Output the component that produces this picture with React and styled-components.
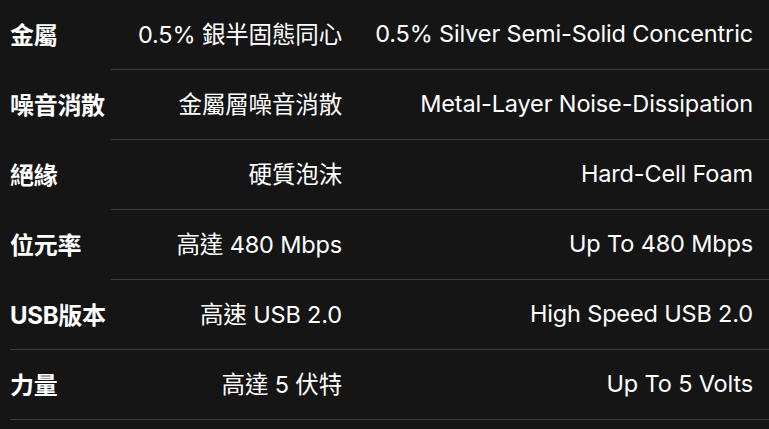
import React from "react";
import styled, { createGlobalStyle } from "styled-components";

const Global = createGlobalStyle`
  html, body { margin: 0; padding: 0; background: #151515; }
  body { font-family: "Inter", "Noto Sans CJK TC", sans-serif; }
`;

const Page = styled.div`
  width: 769px;
  min-height: 429px;
  background: #151515;
  overflow: hidden;
`;

const Row = styled.div`
  display: grid;
  grid-template-columns: 100px 232px 1fr;
  align-items: center;
  height: 66px;
  padding: 0 16px 3px 10px;
  color: #ffffff;
`;

const Label = styled.div`
  font-family: "Inter", "Noto Sans CJK TC", sans-serif;
  font-weight: 700;
  font-size: 24px;
  letter-spacing: -0.3px;
  white-space: nowrap;
`;

const Value = styled.div`
  font-family: "Inter", "Noto Sans CJK TC", sans-serif;
  font-weight: 400;
  font-size: 23.5px;
  letter-spacing: -0.15px;
  text-align: right;
  white-space: nowrap;
`;

const Divider = styled.div`
  height: 1px;
  background: #3d3d3d;
  margin-left: ${(p) => p.$inset}px;
`;

const rows = [
  ["金屬", "0.5% 銀半固態同心", "0.5% Silver Semi-Solid Concentric", 111],
  ["噪音消散", "金屬層噪音消散", "Metal-Layer Noise-Dissipation", 111],
  ["絕緣", "硬質泡沫", "Hard-Cell Foam", 111],
  ["位元率", "高達 480 Mbps", "Up To 480 Mbps", 111],
  ["USB版本", "高速 USB 2.0", "High Speed USB 2.0", 10],
  ["力量", "高達 5 伏特", "Up To 5 Volts", 10],
];

export default function App() {
  return (
    <Page>
      <Global />
      {rows.map(([label, zh, en, inset]) => (
        <React.Fragment key={label}>
          <Row>
            <Label>{label}</Label>
            <Value>{zh}</Value>
            <Value>{en}</Value>
          </Row>
          <Divider $inset={inset} />
        </React.Fragment>
      ))}
    </Page>
  );
}
